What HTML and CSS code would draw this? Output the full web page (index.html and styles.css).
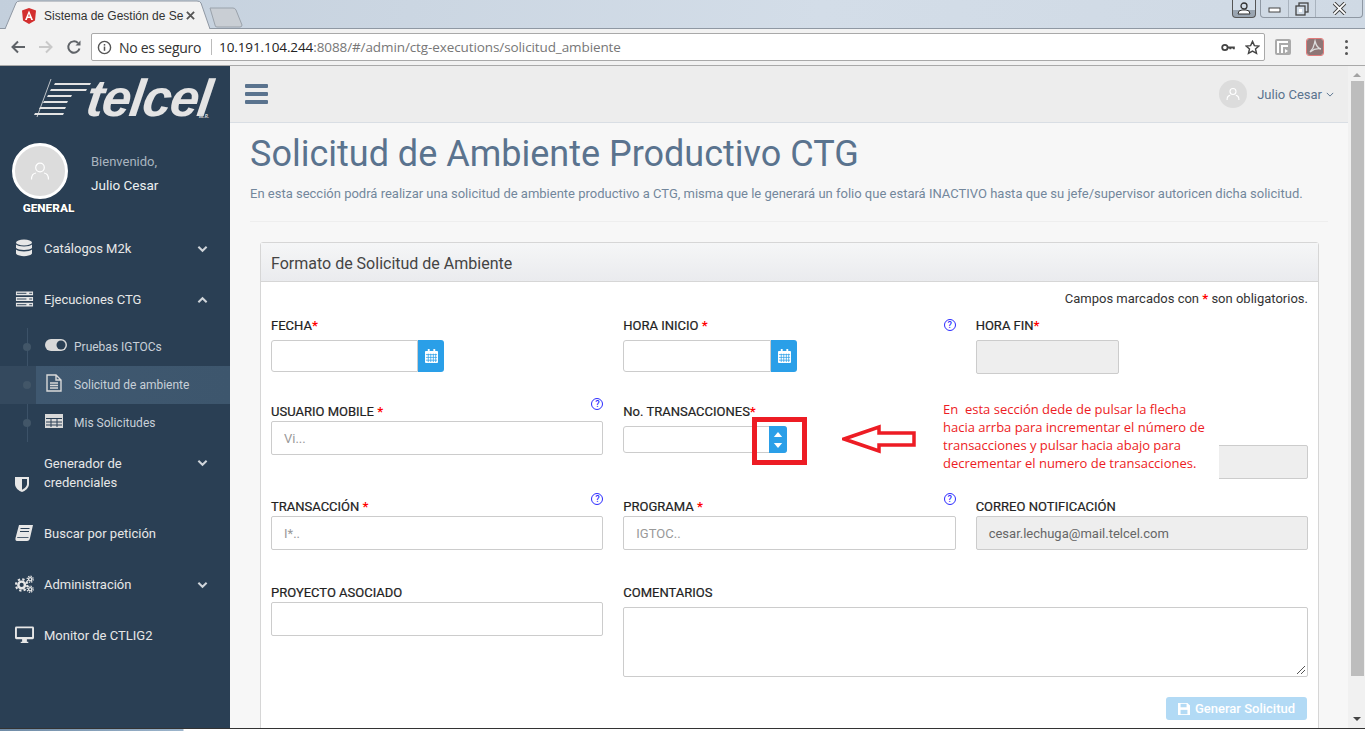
FILE: index.html
```html
<!DOCTYPE html>
<html lang="en">
  <head>
    <meta charset="UTF-8" />
    <meta name="viewport" content="width=device-width, initial-scale=1.0" />
    <title>Sistema de Gestión de Solicitudes</title>
    <link rel="stylesheet" href="styles.css">
  </head>
  <body>
    <div class="tabstrip">
      <div class="tab">
        <svg class="tab-shape" viewBox="0 0 205 29" width="205" height="29"><path d="M0 29 L11 3 Q12 1 15 1 L192 1 Q195 1 196 3 L205 29" fill="#f2f2f2" stroke="#8f98a3"/></svg>
        <svg class="tab-logo" viewBox="0 0 14 16" width="14" height="16"><path d="M7 0 L14 2.500 L13 12.500 L7 16 L1 12.500 L0 2.500 Z" fill="#d32f2f"/><path d="M7 2.500 L3 12 H4.800 L5.600 10 H8.400 L9.200 12 H11 Z M7 5.800 L7.900 8.500 H6.100 Z" fill="#fff"/></svg>
        <span class="tab-title">Sistema de Gestión de Se</span>
        <svg class="tab-close" viewBox="0 0 10 10" width="9" height="9"><path d="M1 1 L9 9 M9 1 L1 9" stroke="#555" stroke-width="2"/></svg>
      </div>
      <svg class="tab-new" viewBox="0 0 34 21" width="34" height="21"><path d="M1 1 H24 Q26 1 27 3 L33 18 Q33 20 31 20 H8 Q6 20 6 18 Z" fill="#c9ced4" stroke="#9aa2ab"/></svg>
      <div class="win-btns">
        <span class="win-user"><svg viewBox="0 0 14 14" width="14" height="14"><circle cx="7" cy="4" r="3" fill="none" stroke="#333" stroke-width="1.300"/><path d="M1 12 Q1 8 5 8 H9 Q13 8 13 12 Z" fill="#fff" stroke="#333"/></svg></span>
        <div class="win-group">
          <span class="win-btn"><svg viewBox="0 0 14 14" width="14" height="14"><rect x="1" y="6" width="11" height="4" fill="#fff" stroke="#444"/></svg></span>
          <span class="win-btn"><svg viewBox="0 0 14 14" width="14" height="14"><rect x="4" y="1" width="9" height="9" fill="none" stroke="#444" stroke-width="1.300"/><rect x="1" y="4" width="9" height="9" fill="#d2dce7" stroke="#444" stroke-width="1.300"/><rect x="4" y="7" width="3" height="3" fill="#fff"/></svg></span>
          <span class="win-btn win-close"><svg viewBox="0 0 14 12" width="17" height="13"><path d="M2 1 L12 11 M12 1 L2 11" stroke="#444" stroke-width="3.400"/><path d="M2 1 L12 11 M12 1 L2 11" stroke="#fff" stroke-width="1.600"/></svg></span>
        </div>
      </div>
    </div>

    <div class="toolbar">
      <svg class="nav-icon" viewBox="0 0 16 16" width="16" height="16"><path d="M15 8 H3 M8 2.500 L2.500 8 L8 13.500" fill="none" stroke="#5f6368" stroke-width="2"/></svg>
      <svg class="nav-icon" viewBox="0 0 16 16" width="16" height="16"><path d="M1 8 H13 M8 2.500 L13.500 8 L8 13.500" fill="none" stroke="#c9c9c9" stroke-width="2"/></svg>
      <svg class="nav-icon" viewBox="0 0 16 16" width="16" height="16"><path d="M13.500 9.500 A5.700 5.700 0 1 1 12 4" fill="none" stroke="#5f6368" stroke-width="2"/><path d="M9.500 6.500 H14.500 V1.500 Z" fill="#5f6368"/></svg>
      <div class="urlbar">
        <svg viewBox="0 0 16 16" width="15" height="15"><circle cx="8" cy="8" r="6.500" fill="none" stroke="#555" stroke-width="1.500"/><rect x="7.200" y="7" width="1.600" height="4.500" fill="#555"/><rect x="7.200" y="4.300" width="1.600" height="1.700" fill="#555"/></svg>
        <span class="url-secure">No es seguro</span>
        <span class="url-sep"></span>
        <span class="url-text"><b>10.191.104.244</b>:8088/#/admin/ctg-executions/solicitud_ambiente</span>
        <svg class="url-key" viewBox="0 0 16 10" width="15" height="9"><circle cx="4" cy="5" r="3" fill="none" stroke="#444" stroke-width="2"/><path d="M7 4 H15 V7 H13 V6 H11 V7 H9 V6 H7 Z" fill="#444"/></svg>
        <svg viewBox="0 0 16 16" width="15" height="15"><path d="M8 1.500 L10 6 L14.800 6.400 L11.200 9.600 L12.300 14.300 L8 11.800 L3.700 14.300 L4.800 9.600 L1.200 6.400 L6 6 Z" fill="none" stroke="#444" stroke-width="1.500"/></svg>
      </div>
      <span class="ext ext-grey"><svg viewBox="0 0 16 16" width="16" height="16"><path d="M2 2 H13 V4 H4 V14 H2 Z M6 6 H13 V8 H8 V14 H6 Z" fill="#fff"/><path d="M10 10 L13 12 L10 14 Z" fill="#fff"/></svg></span>
      <span class="ext ext-pdf"><svg viewBox="0 0 16 16" width="16" height="16"><path d="M8 2 C7 5 8 8 3 13 C7 10 10 9 14 10 C10 9 9 6 8 2 Z" fill="none" stroke="#ddd" stroke-width="1.300"/></svg></span>
      <span class="kebab"><i></i><i></i><i></i></span>
    </div>

    <div class="app">
      <aside class="sidebar">
        <div class="brand">
          <svg class="brand-mark" viewBox="0 0 58 40" width="58" height="40">
            <path d="M17 1 L3 39" stroke="#e4e4e4" stroke-width="0.800"/>
            <path d="M21 5 H57 L56 7 H20 Z M17 11 H53 L52 13 H16 Z M14 17 H38 L37 19 H13 Z M10 23 H34 L33 25 H9 Z M6 29 H32 L31 31 H5 Z M1 35 H30 L29 37 H0 Z" fill="#e4e4e4"/>
          </svg>
          <span class="brand-name">telcel</span>
          <span class="brand-mr">M.R.</span>
        </div>
        <div class="profile">
          <div class="profile-pic">
            <span class="avatar avatar-big"><svg viewBox="0 0 20 20" width="20" height="20"><circle cx="10" cy="6.500" r="4.300" fill="none" stroke="#fff" stroke-width="1.200"/><path d="M1.500 18.500 Q1.500 12.500 6 12 M18.500 18.500 Q18.500 12.500 14 12" fill="none" stroke="#fff" stroke-width="1.200"/></svg></span>
            <span class="profile-role">GENERAL</span>
          </div>
          <div class="profile-info">
            <span class="welcome">Bienvenido,</span>
            <span class="profile-name">Julio Cesar</span>
          </div>
        </div>

        <nav class="menu">
          <a class="menu-item">
            <svg class="menu-icon" viewBox="0 0 18 18" width="18" height="18"><ellipse cx="9" cy="3.500" rx="8" ry="3" fill="#e7e7e7"/><path d="M1 5.500 C3 8 15 8 17 5.500 V9 C15 11.500 3 11.500 1 9 Z M1 10.500 C3 13 15 13 17 10.500 V14.500 C15 18 3 18 1 14.500 Z" fill="#e7e7e7"/></svg>
            <span class="menu-label">Catálogos M2k</span>
            <svg class="chev" viewBox="0 0 12 8" width="11" height="8"><path d="M1.500 1.500 L6 6 L10.500 1.500" fill="none" stroke="#d0d5da" stroke-width="2.200"/></svg>
          </a>
          <a class="menu-item">
            <svg class="menu-icon menu-icon-wide" viewBox="0 0 20 16" width="20" height="16"><path d="M1 0 H19 V4 H1 Z M1 6 H19 V10 H1 Z M1 12 H19 V16 H1 Z" fill="#e7e7e7"/><path d="M2 2 H12 M2 8 H12 M2 14 H12 M15 2 H18 M15 8 H18 M15 14 H18" stroke="#2a3f54" stroke-width="1"/></svg>
            <span class="menu-label">Ejecuciones CTG</span>
            <svg class="chev" viewBox="0 0 12 8" width="11" height="8"><path d="M1.500 6.500 L6 2 L10.500 6.500" fill="none" stroke="#d0d5da" stroke-width="2.200"/></svg>
          </a>
          <div class="submenu">
            <a class="sub-item">
              <svg class="sub-icon" viewBox="0 0 22 12" width="22" height="12"><rect width="22" height="12" rx="6" fill="#d9d9d9"/><circle cx="16" cy="6" r="4.500" fill="#2a3f54"/></svg>
              <span>Pruebas IGTOCs</span>
            </a>
            <a class="sub-item sub-active">
              <svg class="sub-icon" viewBox="0 0 18 18" width="18" height="18"><path d="M2 1 H11 L16 6 V17 H2 Z M11 1 V6 H16" fill="none" stroke="#d9d9d9" stroke-width="1.400"/><path d="M5 9 H13 M5 11.500 H13 M5 14 H13" stroke="#d9d9d9" stroke-width="1.300"/></svg>
              <span>Solicitud de ambiente</span>
            </a>
            <a class="sub-item">
              <svg class="sub-icon" viewBox="0 0 18 14" width="18" height="14"><path d="M0 0 H18 V14 H0 Z" fill="#d9d9d9"/><path d="M1 4.500 H17 M1 8 H17 M1 11 H17 M6 4 V13 M12 4 V13" stroke="#2a3f54" stroke-width="1"/></svg>
              <span>Mis Solicitudes</span>
            </a>
          </div>
          <a class="menu-item menu-item-tall">
            <svg class="menu-icon menu-icon-low" viewBox="0 0 14 16" width="14" height="16"><path d="M0 1 H14 V8 C14 12 10 15 7 16 C4 15 0 12 0 8 Z" fill="#e7e7e7"/><path d="M7 3 H12 V8 C12 10.500 9 13 7 13.700 Z" fill="#2a3f54"/></svg>
            <span class="menu-label">Generador de credenciales</span>
            <svg class="chev chev-top" viewBox="0 0 12 8" width="11" height="8"><path d="M1.500 1.500 L6 6 L10.500 1.500" fill="none" stroke="#d0d5da" stroke-width="2.200"/></svg>
          </a>
          <a class="menu-item">
            <svg class="menu-icon" viewBox="0 0 18 16" width="18" height="16"><path d="M4 0 H18 L15 13 Q14.500 16 12 16 H2 Q0 16 0.500 13 Z" fill="#e7e7e7"/><path d="M5.500 3.500 H14.500 M5 6.500 H14" stroke="#2a3f54" stroke-width="1.200"/><path d="M2.200 12.500 H13.500" stroke="#2a3f54" stroke-width="0.800"/></svg>
            <span class="menu-label">Buscar por petición</span>
          </a>
          <a class="menu-item">
            <svg class="menu-icon menu-icon-wide" viewBox="0 0 20 18" width="20" height="18">
              <circle cx="7" cy="10" r="3.500" fill="none" stroke="#e7e7e7" stroke-width="2.600"/>
              <circle cx="7" cy="10" r="6" fill="none" stroke="#e7e7e7" stroke-width="2.200" stroke-dasharray="2.400 2.300"/>
              <circle cx="16" cy="4" r="1.700" fill="none" stroke="#e7e7e7" stroke-width="1.500"/>
              <circle cx="16" cy="4" r="3.200" fill="none" stroke="#e7e7e7" stroke-width="1.300" stroke-dasharray="1.400 1.100"/>
              <circle cx="16" cy="14.500" r="1.700" fill="none" stroke="#e7e7e7" stroke-width="1.500"/>
              <circle cx="16" cy="14.500" r="3.200" fill="none" stroke="#e7e7e7" stroke-width="1.300" stroke-dasharray="1.400 1.100"/>
            </svg>
            <span class="menu-label">Administración</span>
            <svg class="chev" viewBox="0 0 12 8" width="11" height="8"><path d="M1.500 1.500 L6 6 L10.500 1.500" fill="none" stroke="#d0d5da" stroke-width="2.200"/></svg>
          </a>
          <a class="menu-item">
            <svg class="menu-icon menu-icon-wide" viewBox="0 0 20 18" width="20" height="18"><path d="M1.500 0 H18.500 Q20 0 20 1.500 V12 Q20 13.500 18.500 13.500 H1.500 Q0 13.500 0 12 V1.500 Q0 0 1.500 0 Z M2 2 V11 H18 V2 Z" fill="#e7e7e7" fill-rule="evenodd"/><path d="M7.500 13 H12.500 V16 H14 V17.500 H6 V16 H7.500 Z" fill="#e7e7e7"/></svg>
            <span class="menu-label">Monitor de CTLIG2</span>
          </a>
        </nav>
      </aside>

      <div class="main">
        <header class="topbar">
          <span class="hamburger"><i></i><i></i><i></i></span>
          <div class="user-menu">
            <span class="avatar avatar-small"><svg viewBox="0 0 20 20" width="14" height="14"><circle cx="10" cy="6.500" r="4.300" fill="none" stroke="#fff" stroke-width="1.600"/><path d="M1.500 18.500 Q1.500 12.500 6 12 M18.500 18.500 Q18.500 12.500 14 12" fill="none" stroke="#fff" stroke-width="1.600"/></svg></span>
            <span class="user-name">Julio Cesar</span>
            <svg viewBox="0 0 10 6" width="8" height="5"><path d="M1 1 L5 5 L9 1" fill="none" stroke="#5a738e" stroke-width="1.200"/></svg>
          </div>
        </header>

        <section class="content">
          <h1 class="page-title">Solicitud de Ambiente Productivo CTG</h1>
          <p class="page-desc">En esta sección podrá realizar una solicitud de ambiente productivo a CTG, misma que le generará un folio que estará INACTIVO hasta que su jefe/supervisor autoricen dicha solicitud.</p>

          <div class="panel">
            <div class="panel-head">Formato de Solicitud de Ambiente</div>
            <div class="panel-body">
              <p class="required-note">Campos marcados con <b>*</b> son obligatorios.</p>

              <div class="form-row row-1">
                <div class="field">
                  <label>FECHA<b>*</b></label>
                  <div class="date-group">
                    <span class="input"></span>
                    <span class="addon"><svg viewBox="0 0 14 15" width="13" height="14"><path d="M1 2 H3 V0 H5 V2 H9 V0 H11 V2 H13 Q14 2 14 3 V14 Q14 15 13 15 H1 Q0 15 0 14 V3 Q0 2 1 2 Z" fill="#fff"/><path d="M1 6 H13 M1 9 H13 M1 12 H13 M3.500 5 V14 M6.200 5 V14 M9 5 V14 M11.500 5 V14" stroke="#2a9fe8" stroke-width="0.800"/></svg></span>
                  </div>
                </div>
                <div class="field">
                  <label>HORA INICIO <b>*</b></label>
                  <span class="help">?</span>
                  <div class="date-group">
                    <span class="input"></span>
                    <span class="addon"><svg viewBox="0 0 14 15" width="13" height="14"><path d="M1 2 H3 V0 H5 V2 H9 V0 H11 V2 H13 Q14 2 14 3 V14 Q14 15 13 15 H1 Q0 15 0 14 V3 Q0 2 1 2 Z" fill="#fff"/><path d="M1 6 H13 M1 9 H13 M1 12 H13 M3.500 5 V14 M6.200 5 V14 M9 5 V14 M11.500 5 V14" stroke="#2a9fe8" stroke-width="0.800"/></svg></span>
                  </div>
                </div>
                <div class="field">
                  <label>HORA FIN<b>*</b></label>
                  <span class="input input-off input-short"></span>
                </div>
              </div>

              <div class="form-row row-2">
                <div class="field">
                  <label>USUARIO MOBILE <b>*</b></label>
                  <span class="help help-up">?</span>
                  <span class="input input-tall">Vi...</span>
                </div>
                <div class="field">
                  <label>No. TRANSACCIONES<b>*</b></label>
                  <div class="spin-group">
                    <span class="input"></span>
                    <span class="spin">
                      <svg viewBox="0 0 10 6" width="10" height="5"><path d="M5 0 L10 6 H0 Z" fill="#fff"/></svg>
                      <svg viewBox="0 0 10 6" width="10" height="5"><path d="M0 0 H10 L5 6 Z" fill="#fff"/></svg>
                    </span>
                  </div>
                </div>
                <div class="field">
                  <span class="input input-off input-tall input-hidden-label"></span>
                </div>
              </div>

              <div class="form-row row-3">
                <div class="field">
                  <label>TRANSACCIÓN <b>*</b></label>
                  <span class="help help-up">?</span>
                  <span class="input input-tall">I*..</span>
                </div>
                <div class="field">
                  <label>PROGRAMA <b>*</b></label>
                  <span class="help help-up">?</span>
                  <span class="input input-tall">IGTOC..</span>
                </div>
                <div class="field">
                  <label>CORREO NOTIFICACIÓN</label>
                  <span class="input input-off input-tall input-dark">cesar.lechuga@mail.telcel.com</span>
                </div>
              </div>

              <div class="form-row row-4">
                <div class="field">
                  <label>PROYECTO ASOCIADO</label>
                  <span class="input input-tall"></span>
                </div>
                <div class="field field-wide">
                  <label>COMENTARIOS</label>
                  <span class="input textarea">
                    <svg class="grip" viewBox="0 0 10 10" width="10" height="10"><path d="M1 9 L9 1 M5 9 L9 5" stroke="#555" stroke-width="1"/></svg>
                  </span>
                </div>
              </div>

              <div class="form-actions">
                <button class="btn-save" type="button">
                  <svg viewBox="0 0 14 14" width="12" height="12"><path d="M0 0 H11 L14 3 V14 H0 Z" fill="#fff"/><rect x="3" y="1" width="7" height="4" fill="#b2daf5"/><rect x="3" y="8" width="8" height="5" fill="#b2daf5"/></svg>
                  Generar Solicitud
                </button>
              </div>

              <div class="note">En &nbsp;esta sección dede de pulsar la flecha<br>hacia arrba para incrementar el número de<br>transacciones y pulsar hacia abajo para<br>decrementar el numero de transacciones.</div>
              <span class="mark-box"></span>
              <svg class="mark-arrow" viewBox="0 0 74 30" width="74" height="30"><path d="M2 15 L37 3 V9 H72 V21 H37 V27 Z" fill="#fff" stroke="#ed1c24" stroke-width="3.500"/></svg>
            </div>
          </div>
        </section>
      </div>

      <div class="scrollbar">
        <svg viewBox="0 0 10 5" width="8" height="4"><path d="M5 0 L10 5 H0 Z" fill="#a3a3a3"/></svg>
        <span class="scroll-thumb"></span>
        <svg viewBox="0 0 10 5" width="8" height="4"><path d="M0 0 H10 L5 5 Z" fill="#444"/></svg>
      </div>
    </div>

    <div class="taskbar"></div>
  </body>
</html>
```

FILE: styles.css
```css
* {
  box-sizing: border-box;
}

html,
body {
  height: 100%;
}

body {
  font-family: Roboto, "Liberation Sans", sans-serif;
  margin: 0;
  padding: 0;
  height: 731px;
  overflow: hidden;
  display: flex;
  flex-direction: column;
  background-color: #f7f7f7;
  color: #333;
}

/* browser window */
.tabstrip {
  height: 29px;
  display: flex;
  align-items: flex-end;
  padding-left: 5px;
  background: linear-gradient(100deg, #c3cfdc, #d3dde8 60%, #cfd9e4);
  border-bottom: 1px solid #8f98a3;
  flex-shrink: 0;
}

.tab {
  position: relative;
  width: 205px;
  height: 29px;
  margin-bottom: -1px;
  display: flex;
  align-items: center;
  padding: 2px 0 0 17px;
  font-size: 12px;
  color: #333;
  flex-shrink: 0;
}

.tab-shape {
  position: absolute;
  left: 0;
  top: 0;
}

.tab-logo,
.tab-title,
.tab-close {
  position: relative;
  flex-shrink: 0;
}

.tab-title {
  width: 134px;
  margin-left: 8px;
  white-space: nowrap;
  font-family: "Liberation Sans", sans-serif;
}

.tab-close {
  margin-left: 8px;
}

.tab-new {
  margin: 0 0 0 -1px;
}

.win-btns {
  margin-left: auto;
  display: flex;
  align-self: flex-start;
  gap: 4px;
  margin-right: 2px;
}

.win-user {
  width: 24px;
  height: 18px;
  display: flex;
  align-items: center;
  justify-content: center;
  border: 1px solid #555;
  border-top: none;
  border-radius: 0 0 4px 4px;
  background: linear-gradient(#d3dde8 60%, #9aa5b1 60%);
}

.win-group {
  display: flex;
  height: 18px;
  border: 1px solid #8f98a3;
  border-top: none;
  border-radius: 0 0 4px 4px;
}

.win-btn {
  width: 27px;
  display: flex;
  align-items: center;
  justify-content: center;
  border-left: 1px solid #a9b3be;
}

.win-btn:first-child {
  border-left: none;
}

.win-close {
  width: 47px;
}

.toolbar {
  height: 37px;
  display: flex;
  align-items: center;
  padding: 0 10px;
  background-color: #f2f2f2;
  border-bottom: 1px solid #a9a9a9;
  flex-shrink: 0;
}

.nav-icon {
  margin-right: 12px;
}

.toolbar .nav-icon:nth-child(3) {
  margin-right: 10px;
}

.urlbar {
  width: 1174px;
  height: 28px;
  margin-left: -1px;
  display: flex;
  align-items: center;
  gap: 7px;
  padding: 0 4px 0 5px;
  background-color: #fff;
  border: 1px solid #a9a9a9;
  border-radius: 2px;
  font-size: 13px;
  font-family: "Liberation Sans", sans-serif;
  flex-shrink: 0;
}

.url-secure {
  color: #333;
  font-size: 14px;
  font-family: "Open Sans", sans-serif;
  letter-spacing: -0.3px;
}

.url-sep {
  width: 1px;
  height: 16px;
  background-color: #bbb;
  margin: 0 0 0 3px;
}

.url-text {
  flex: 1;
  color: #777;
  font-family: "Open Sans", sans-serif;
  font-size: 13.500px;
  letter-spacing: -0.1px;
}

.url-text b {
  font-weight: normal;
  color: #222;
}

.url-key {
  margin-right: 2px;
}

.ext {
  width: 16px;
  height: 16px;
  display: inline-block;
  margin-left: 10px;
  background-color: #aaa;
  border-radius: 2px;
}

.ext-pdf {
  margin-left: 16px;
  background-color: #8e7676;
  outline: 1px solid #e07a7a;
}

.kebab {
  display: flex;
  flex-direction: column;
  gap: 3px;
  margin-left: 22px;
}

.kebab i {
  width: 3px;
  height: 3px;
  background-color: #555;
  border-radius: 50%;
}

.taskbar {
  height: 3px;
  background: linear-gradient(90deg, #6f8ba6 0, #9db5cc 183px, #fff 184px);
  border-top: 1px solid #333;
  flex-shrink: 0;
}

/* app */
.app {
  flex: 1;
  display: flex;
  min-height: 0;
}

.sidebar {
  width: 230px;
  flex-shrink: 0;
  background-color: #2a3f54;
  color: #e7e7e7;
}

.brand {
  position: relative;
  height: 57px;
  display: flex;
  align-items: flex-start;
  padding: 17px 0 0 34px;
}

.brand-mark {
  margin-top: -5px;
}

.brand-name {
  display: inline-block;
  font-family: "Liberation Sans", sans-serif;
  font-style: italic;
  font-weight: bold;
  font-size: 52px;
  line-height: 31px;
  letter-spacing: -1.500px;
  color: #e4e4e4;
  margin-left: -5px;
  transform: skewX(-8deg);
}

.brand-mr {
  position: absolute;
  left: 199px;
  top: 47px;
  font-size: 5px;
  font-weight: bold;
  font-style: italic;
  color: #d9d9d9;
}

.profile {
  height: 100px;
  display: flex;
  padding: 20px 0 0 12px;
}

.profile-pic {
  width: 56px;
  display: flex;
  flex-direction: column;
  align-items: center;
}

.avatar {
  display: flex;
  align-items: center;
  justify-content: center;
  border-radius: 50%;
  background-color: #dcdcdc;
  flex-shrink: 0;
}

.avatar-big {
  width: 56px;
  height: 56px;
  border: 3px solid #fff;
}

.avatar-small {
  width: 28px;
  height: 28px;
}

.profile-role {
  font-size: 11.800px;
  font-weight: 900;
  color: #fff;
  margin-top: 2px;
  margin-left: 17px;
  white-space: nowrap;
  text-shadow: 0 0 1px #000;
}

.profile-info {
  display: flex;
  flex-direction: column;
  margin: 11px 0 0 23px;
  font-size: 13px;
}

.welcome {
  color: #a9b4bf;
  line-height: 16px;
}

.profile-name {
  margin-top: 7px;
  font-size: 13.500px;
  color: #ecf0f1;
  line-height: 16px;
}

.menu {
  display: flex;
  flex-direction: column;
}

.menu-item {
  height: 51px;
  display: flex;
  align-items: center;
  padding: 0 22px 0 15px;
  font-size: 13px;
  color: #e7e7e7;
}

.menu-item-tall {
  height: 66px;
  align-items: flex-start;
  padding-top: 12px;
}

.menu-label {
  margin-left: 11px;
  flex: 1;
  line-height: 19px;
  width: 100px;
  padding-right: 30px;
}

.menu-icon {
  width: 18px;
  margin-top: -2px;
}

.menu-icon-wide {
  width: 19px;
  margin-right: -1px;
}

.menu-icon-low {
  width: 14px;
  margin: 22px 4px 0 0;
}

.chev-top {
  margin-top: 5px;
}

.submenu {
  position: relative;
  display: flex;
  flex-direction: column;
  padding-top: 3px;
}

.submenu::before {
  content: "";
  position: absolute;
  left: 27px;
  top: 3px;
  bottom: 0;
  width: 1px;
  background-color: #3c5268;
}

.sub-item {
  position: relative;
  height: 38px;
  display: flex;
  align-items: center;
  padding-left: 45px;
  font-size: 12px;
  color: #c8d0d8;
}

.sub-item::before {
  content: "";
  position: absolute;
  left: 23px;
  top: 15px;
  width: 8px;
  height: 8px;
  border-radius: 50%;
  background-color: #425668;
}

.sub-item span {
  margin-left: 29px;
  position: absolute;
  left: 45px;
}

.sub-icon {
  margin-top: -4px;
}

.sub-active {
  background: linear-gradient(90deg, #34495e 36px, #3f5870 36px, #3d566d);
}

.main {
  flex: 1;
  min-width: 0;
  display: flex;
  flex-direction: column;
  overflow: hidden;
}

.topbar {
  height: 57px;
  flex-shrink: 0;
  display: flex;
  align-items: center;
  justify-content: space-between;
  padding: 0 14px 0 15px;
  background-color: #ededed;
  border-bottom: 1px solid #d9dee4;
}

.hamburger {
  display: flex;
  flex-direction: column;
  gap: 4px;
  margin-top: -1px;
}

.hamburger i {
  width: 23px;
  height: 4px;
  border-radius: 1px;
  background-color: #5a738e;
}

.user-menu {
  display: flex;
  align-items: center;
  font-size: 13px;
  color: #5a738e;
}

.user-name {
  margin: 0 4px 0 10px;
}

.content {
  flex: 1;
  padding: 0 20px;
}

.page-title {
  margin: 9px 0 0;
  font-size: 36px;
  font-weight: 400;
  line-height: 44px;
  color: #5a738e;
}

.page-desc {
  margin: 9px 0 0;
  padding-bottom: 18px;
  font-size: 13px;
  line-height: 18px;
  color: #73879c;
  border-bottom: 1px solid #eee;
  white-space: nowrap;
}

.panel {
  margin: 20px 9px 0 10px;
  background-color: #fff;
  border: 1px solid #d6d6d6;
  border-radius: 3px;
  height: 520px;
}

.panel-head {
  height: 39px;
  padding: 3px 10px 0;
  display: flex;
  align-items: center;
  font-size: 16px;
  color: #444;
  background: linear-gradient(#f5f6f7, #eaebee);
  border-bottom: 1px solid #d6d6d6;
}

.panel-body {
  position: relative;
  padding: 0 10px;
}

.required-note {
  margin: 0;
  height: 30px;
  padding-top: 9px;
  text-align: right;
  font-size: 13px;
  line-height: 16px;
  color: #333;
}

.required-note b,
label b {
  color: #f00;
}

.form-row {
  display: grid;
  grid-template-columns: repeat(3, 1fr);
  column-gap: 20px;
}

.row-1 {
  height: 86px;
}

.row-2 {
  height: 95px;
}

.row-3 {
  height: 86px;
}

.row-4 {
  height: 100px;
}

.field {
  position: relative;
  display: flex;
  flex-direction: column;
}

.field label {
  display: block;
  height: 19px;
  font-size: 13px;
  line-height: 19px;
  color: #222;
  white-space: nowrap;
  margin-top: 4px;
  -webkit-text-stroke: 0.2px #222;
}

.field label b {
  -webkit-text-stroke: 0;
}

.row-1 label {
  margin-bottom: 5px;
}

.help {
  position: absolute;
  right: 0;
  top: 7px;
  width: 12px;
  height: 12px;
  border: 1px solid #2b2bff;
  border-radius: 50%;
  font-size: 9px;
  font-weight: 500;
  line-height: 10px;
  text-align: center;
  color: #2b2bff;
}

.help-up {
  top: 0;
  right: 0;
}

.input {
  display: flex;
  align-items: center;
  height: 32px;
  padding: 0 12px;
  border: 1px solid #ccc;
  border-radius: 2px;
  background-color: #fff;
  font-size: 13px;
  color: #999;
}

.input-tall {
  height: 34px;
}

.input-off {
  background-color: #eee;
}

.input-short {
  width: 143px;
  height: 34px;
}

.input-dark {
  color: #666;
}

.input-hidden-label {
  margin-top: 47px;
}

.date-group,
.spin-group {
  display: flex;
}

.date-group .input {
  width: 148px;
  border-radius: 3px 0 0 3px;
}

.row-1 .field:first-child .input {
  width: 147px;
}

.addon {
  width: 26px;
  height: 32px;
  display: flex;
  align-items: center;
  justify-content: center;
  background-color: #2a9fe8;
  border-radius: 0 3px 3px 0;
}

.spin-group {
  margin-top: 5px;
}

.spin-group .input {
  flex: 0 0 164px;
  height: 27px;
  border-radius: 3px;
}

.spin {
  width: 18px;
  height: 27px;
  margin-left: -18px;
  display: flex;
  flex-direction: column;
  align-items: center;
  justify-content: center;
  gap: 6px;
  background-color: #2a9fe8;
  border-radius: 0 3px 3px 0;
}

.field-wide {
  grid-column: span 2;
}

.textarea {
  position: relative;
  height: 70px;
  margin-top: 5px;
}

.grip {
  position: absolute;
  right: 1px;
  bottom: 1px;
}

.form-actions {
  display: flex;
  justify-content: flex-end;
  margin-top: 18px;
  padding-right: 1px;
}

.btn-save {
  width: 141px;
  height: 23px;
  display: flex;
  align-items: center;
  justify-content: center;
  gap: 5px;
  border: none;
  border-radius: 3px;
  background-color: #b2daf5;
  font-family: Roboto, sans-serif;
  font-size: 13px;
  font-weight: 500;
  color: #fff;
}

/* notes pasted over the capture */
.note {
  position: absolute;
  left: 669px;
  top: 116px;
  width: 289px;
  height: 81px;
  padding: 2px 0 0 13px;
  background-color: #fff;
  font-family: "Open Sans", sans-serif;
  font-size: 13px;
  line-height: 18px;
  color: #ed1c24;
  white-space: nowrap;
}

.mark-box {
  position: absolute;
  left: 491px;
  top: 135px;
  width: 55px;
  height: 48px;
  border: 5px solid #ed1c24;
}

.mark-arrow {
  position: absolute;
  left: 581px;
  top: 142px;
}

.scrollbar {
  width: 17px;
  flex-shrink: 0;
  display: flex;
  flex-direction: column;
  align-items: center;
  justify-content: space-between;
  padding: 7px 0 7px;
  background-color: #f1f1f1;
}

.scroll-thumb {
  width: 13px;
  height: 595px;
  margin: 4px 0 auto 1px;
  background-color: #bdbdbd;
}
```
